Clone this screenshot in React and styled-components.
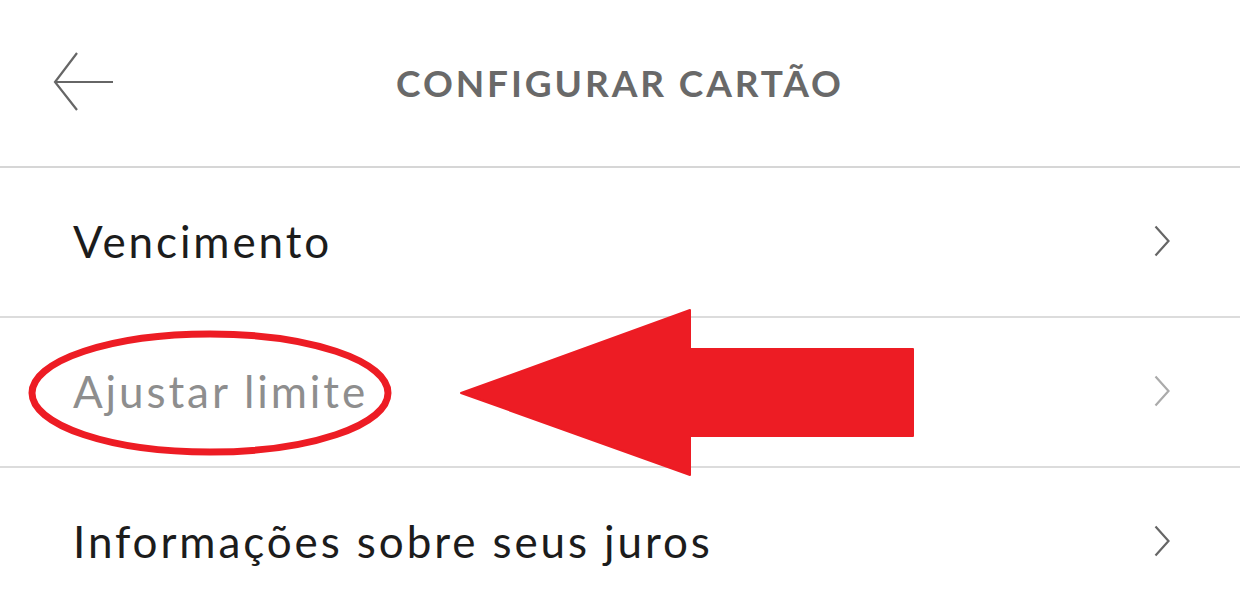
import React from 'react';
import styled, { createGlobalStyle } from 'styled-components';

const GlobalStyle = createGlobalStyle`
    html, body {
        margin: 0;
        padding: 0;
        background: #ffffff;
    }
    body {
        font-family: "Lato", "Liberation Sans", sans-serif;
    }
`;

const Page = styled.div`
    position: relative;
    width: 1240px;
    height: 604px;
    overflow: hidden;
    background: #ffffff;
`;

const Header = styled.header`
    height: 168px;
    box-sizing: border-box;
    padding-bottom: 2px;
    display: flex;
    align-items: center;
    justify-content: center;
    position: relative;
    border-bottom: 2px solid #d6d6d6;
`;

const BackButton = styled.button`
    position: absolute;
    left: 52px;
    top: 50px;
    width: 64px;
    height: 64px;
    padding: 0;
    border: none;
    background: none;
    display: flex;
    cursor: pointer;
`;

const Title = styled.h1`
    margin: 0;
    font-family: "Lato", "Liberation Sans", sans-serif;
    font-weight: 700;
    font-size: 37px;
    letter-spacing: 2.9px;
    color: #696969;
    text-transform: uppercase;
`;

const List = styled.ul`
    list-style: none;
    margin: 0;
    padding: 0;
`;

const Row = styled.li`
    height: 150px;
    box-sizing: border-box;
    border-bottom: 2px solid #dcdcdc;
    display: flex;
    align-items: center;
    justify-content: space-between;
    padding: 0 70px 2px 73px;
`;

const Label = styled.span`
    font-family: "Lato", "Liberation Sans", sans-serif;
    font-size: 44px;
    letter-spacing: 2.9px;
    color: ${({ $disabled }) => ($disabled ? '#8e8e8e' : '#1c1c1c')};
`;

const Chevron = styled.svg`
    width: 16px;
    height: 32px;
    flex-shrink: 0;
`;

const Annotations = styled.svg`
    position: absolute;
    left: 0;
    top: 0;
    width: 1240px;
    height: 604px;
    pointer-events: none;
`;

const items = [
    { label: 'Vencimento' },
    { label: 'Ajustar limite', disabled: true },
    { label: 'Informações sobre seus juros' },
];

function BackArrow() {
    return (
        <svg width="64" height="64" viewBox="0 0 64 64" fill="none">
            <path d="M3 32 H61 M25 3 L3 32 L25 60" stroke="#666666" strokeWidth="2.2" />
        </svg>
    );
}

function App() {
    return (
        <Page>
            <GlobalStyle />
            <Header>
                <BackButton aria-label="Voltar">
                    <BackArrow />
                </BackButton>
                <Title>Configurar cartão</Title>
            </Header>
            <List>
                {items.map((item) => (
                    <Row key={item.label}>
                        <Label $disabled={item.disabled}>{item.label}</Label>
                        <Chevron viewBox="0 0 16 32" fill="none">
                            <path
                                d="M1.5 1.5 L14.5 16 L1.5 30.5"
                                stroke={item.disabled ? '#ababab' : '#666666'}
                                strokeWidth="2.2"
                            />
                        </Chevron>
                    </Row>
                ))}
            </List>
            {/* red markup drawn over the screenshot */}
            <Annotations viewBox="0 0 1240 604">
                <ellipse cx="210" cy="393" rx="178" ry="59" fill="none" stroke="#ed1c24" strokeWidth="7" />
                <path
                    d="M461 393 L690 310 L690 349 L913 349 L913 436 L690 436 L690 475 Z"
                    fill="#ed1c24"
                    stroke="#ed1c24"
                    strokeWidth="2"
                    strokeLinejoin="round"
                />
            </Annotations>
        </Page>
    );
}

export default App;
